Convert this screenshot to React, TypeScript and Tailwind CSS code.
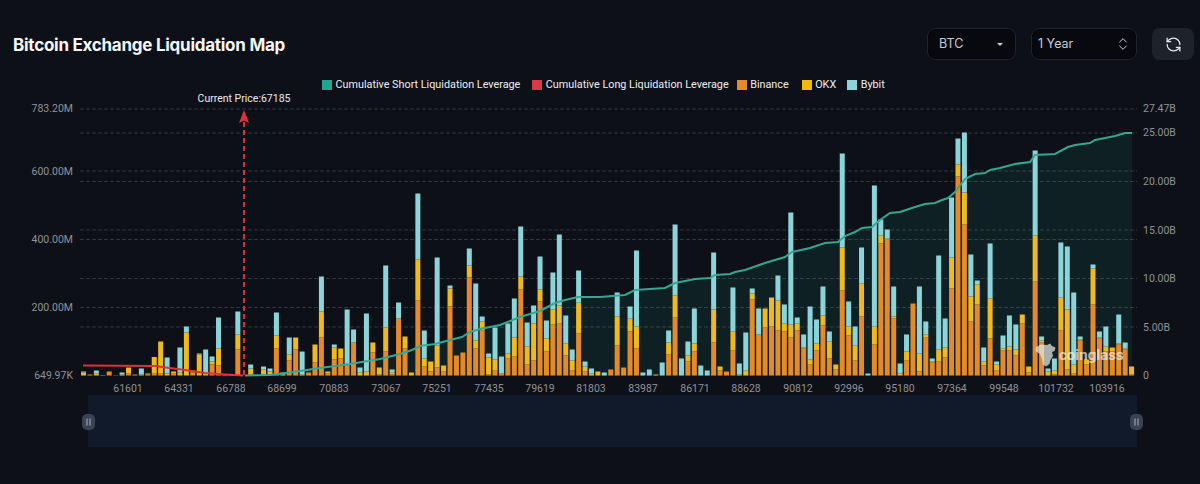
import React from "react";
import { RefreshCcw, ChevronsUpDown } from "lucide-react";

const O = "#e58a2a", Y = "#efb91f", B = "#8bd5da";
const barsData: [number, number, number][] = [
[0,3,1],[1,0,0],[0,2,3],[0.5,0,0],[4,0,0],[0.3,0,0],[0,1,2],[2,6,0],[1,0,0],[0,1,6],[1,1,0],[2,16.5,0],[2,32,0],[0,2,16],[2,2,0],[0,3,25],[0,43,6],[3,2,0],[0,21,1],[0,2,24],[11,3,5],[10,17,31],[0.5,0,0.5],[1,0,0],[26,15,23],[0,0,0],[1,6,4],[0,0,0],[1,5,3],[1,3,3],[27,13,23],[0,1,2],[15,6,17],[26,12,0],
[0,1,23],[3,0,0],[13,18,0],[38,26,35],[2,2,0],[16,12,3],[17,10,0],[10,0,56],[33,0,13],[0,3,5],[0,4,58],[23,10,0],[1,7,0],[24,24,62],[1,2,3],[57,0,16],[27,12,0],[0,3,0],[75,41,66],[9,8,28],[4,10,0],[8,22,88],[4,6,0],[69,18,3],[20,0,0],[23,0,0],[98,12,17],[27,8,57],[45,9,5],[1,17,4],[5,11,32],[2,0,17],[17,5,30],[19,19,39],[86,13,50],[11,18,24],[15,37,18],[74,12,33],[24,13,18],[51,15,37],[52,18,71],[20,12,28],[5,10,11],[42,31,32],[4,5,5],[0,2,5],[0,4,0],
[0,0,3],[6,0,0],[30,29,24],[8,0,0],[44,13,12],[27,22,76],[0,0,3],[0,0,6],[0,1,0],[0,0,13],[21,12,12],[58,22,71],[0,0,17],[14,6,14],[24,8,35],[0,0,10],[0,0,5],[33,33,57],[5,4,0],[4,0,0],[25,19,44],[0,1,11],[0,5,38],[76,6,5],[41,0,26],[48,19,0],[49,29,0],[45,30,25],[44,8,19],[38,13,112],[45,7,6],[27,1,13],[11,5,53],[25,7,24],[50,10,29],[17,17,10],[6,5,0],[85,43,94],[40,9,25],[15,15,19],[59,33,36],[0,0,2],[31,18,141],[132,8,16],[136,1,9],[57,2,30],
[0,2,10],[15,9,17],[72,0,0],[4,18,67],[38,3,13],[13,1,3],[14,12,94],[18,10,29],[87,31,60],[199,12,26],[151,32,60],[54,25,42],[71,20,4],[10,4,14],[37,40,55],[5,6,3],[25,2,13],[25,4,31],[20,6,25],[52,9,0],[3,6,0],[94,46,85],[33,2,4],[0,4,3],[1,4,12],[45,33,55],[6,60,63],[2,9,72],[35,1,3],[11,5,0],[71,36,4],[37,1,6],[24,5,20],[24,4,0],[31,1,29],[26,1,6],[1,8,0],
];

const green: [number, number][] = [[245,375.5],[270,375],[290,372.5],[300,371],[320,368],[350,364],[380,359],[400,354],[412,350],[420,346],[435,344],[450,340],[462,337],[470,332],[480,329],[500,325],[520,317],[540,311],[555,303],[565,300],[578,297],[600,297],[625,295],[635,290],[665,288],[675,283],[695,279],[710,278],[715,275],[730,274],[735,272],[745,270],[765,263],[785,257],[792,252],[810,248],[825,243],[838,242],[845,236],[855,232],[862,228],[872,227],[880,220],[890,213],[900,212],[915,207],[925,204],[935,203],[942,200],[948,198],[955,192],[965,179],[975,174],[985,173],[990,170],[1000,168],[1015,164],[1030,162],[1035,155],[1055,154],[1068,147],[1075,145],[1090,143],[1095,140],[1115,136],[1125,133],[1132,133]];
const red: [number, number][] = [[83,365.5],[155,366],[170,368],[185,370],[205,373],[225,374.5],[243,375.5]];
const pts = (a: [number, number][]) => a.map((p) => p.join(",")).join(" ");

const xLabels: [string, number][] = [["61601",128],["64331",179],["66788",231],["68699",282],["70883",334],["73067",386],["75251",437],["77435",489],["79619",540],["81803",591],["83987",643],["86171",695],["88628",746],["90812",798],["92996",849],["95180",900],["97364",952],["99548",1004],["101732",1056],["103916",1107]];
const gridY = [109, 133, 171, 181.5, 230, 239.5, 278.5, 307.5, 327];
const leftLabels: [string, number][] = [["783.20M",108],["600.00M",171],["400.00M",239],["200.00M",307],["649.97K",375]];
const rightLabels: [string, number][] = [["27.47B",108],["25.00B",132],["20.00B",181],["15.00B",230],["10.00B",278],["5.00B",327],["0",375]];
const legend: [string, string, string][] = [["#20a58d","Cumulative Short Liquidation Leverage","mr-[12px]"],["#df3547","Cumulative Long Liquidation Leverage","mr-[8px]"],[O,"Binance","mr-[13px]"],["#f0b90b","OKX","mr-[11px]"],[B,"Bybit",""]];
const FONT = "Roboto, 'Liberation Sans', sans-serif";
const BASE = 375.5;

function Bars() {
  return (
    <g>
      {barsData.map(([o, y, b], i) => {
        const x = 81 + i * 6.43;
        return (
          <g key={i}>
            {o > 0 && <rect x={x} y={BASE - o} width={5} height={o} fill={O} />}
            {y > 0 && <rect x={x} y={BASE - o - y} width={5} height={y} fill={Y} />}
            {b > 0 && <rect x={x} y={BASE - o - y - b} width={5} height={b} fill={B} />}
          </g>
        );
      })}
    </g>
  );
}

function Handle({ x }: { x: number }) {
  return (
    <g>
      <rect x={x} y={414} width={13} height={16} rx={5} fill="#3a4254" />
      <rect x={x + 4.5} y={418.5} width={1} height={7} fill="#aab0bd" />
      <rect x={x + 7.5} y={418.5} width={1} height={7} fill="#aab0bd" />
    </g>
  );
}

export default function App() {
  return (
    <div className="w-[1200px] h-[484px] bg-[#0d1017] overflow-hidden flex flex-col font-['Inter',sans-serif]">
      <div className="h-[77px] shrink-0 flex items-center justify-between pl-[13px] pr-[6px] pt-[11px]">
        <h1 className="text-[17px] mt-[4px] font-bold text-[#f4f6f8] tracking-[-0.26px]">Bitcoin Exchange Liquidation Map</h1>
        <div className="flex items-center gap-[15px]">
          <div className="w-[89px] h-[32px] rounded-lg border border-[#1f2329] bg-[#07090f] flex items-center justify-between pl-[11px] pr-[12px] text-[12.5px] text-[#c9cbdc]">
            <span>BTC</span>
            <span className="w-0 h-0 border-x-[3.5px] border-x-transparent border-t-[3.5px] border-t-[#c9cbdc]" />
          </div>
          <div className="w-[106px] h-[32px] rounded-lg border border-[#1f2329] bg-[#07090f] flex items-center justify-between pl-[6px] pr-[5px] text-[12.5px] text-[#c9cbdc]">
            <span>1 Year</span>
            <ChevronsUpDown size={16} strokeWidth={1.5} color="#c9cbdc" />
          </div>
          <button className="w-[42px] h-[32px] rounded-lg bg-[#1e222b] flex items-center justify-center">
            <RefreshCcw size={17} strokeWidth={1.8} color="#e6e8ee" />
          </button>
        </div>
      </div>
      <div className="h-[16px] shrink-0 flex items-center pl-[322px] text-[10.8px] text-[#eceef2] font-['Roboto',sans-serif]">
        {legend.map(([c, t, m]) => (
          <div key={t} className={`flex items-center gap-[3.5px] ${m}`}>
            <span className="w-[10px] h-[10px] block" style={{ background: c }} />
            <span>{t}</span>
          </div>
        ))}
      </div>
      <svg width={1200} height={391} viewBox="0 93 1200 391" className="block shrink-0" fontFamily={FONT}>
        {gridY.map((y) => (
          <line key={y} x1={80} x2={1137} y1={y} y2={y} stroke="#33363d" strokeWidth={1} strokeDasharray="4 2" />
        ))}
        <polygon points={`245,376 ${pts(green)} 1132,376`} fill="#19a08c" fillOpacity={0.11} />
        <Bars />
        <polyline points={pts(green)} fill="none" stroke="#35a68f" strokeWidth={2} />
        <polyline points={pts(red)} fill="none" stroke="#e0303f" strokeWidth={2} />
        <line x1={244} x2={244} y1={375} y2={118} stroke="#d92f3c" strokeWidth={2} strokeDasharray="5 3" />
        <polygon points="244,110 249,123 244,120.5 239,123" fill="#e0303f" />
        <text x={244} y={101.5} textAnchor="middle" fontSize={10.5} fill="#e8eaee">Current Price:67185</text>
        {leftLabels.map(([t, y]) => (
          <text key={t} x={73} y={y + 3.8} textAnchor="end" fontSize={10.5} fill="#8f9298">{t}</text>
        ))}
        {rightLabels.map(([t, y]) => (
          <text key={t} x={1143} y={y + 3.8} fontSize={10.5} fill="#8f9298">{t}</text>
        ))}
        {xLabels.map(([t, x]) => (
          <text key={t} x={x} y={392} textAnchor="middle" fontSize={10.5} fill="#8f9298">{t}</text>
        ))}
        <rect x={88} y={395} width={1049} height={52} fill="#111a2b" />
        <Handle x={82} />
        <Handle x={1130} />
        <g opacity={0.72}>
          <path d="M1036 347 L1041 344.5 L1047 345 L1050 343.5 L1052 346 L1055.5 347.5 L1054.5 351 L1052 352 L1053 356 L1050.5 360 L1049.5 364 L1046 366.5 L1043 364.5 L1042 359 L1040 354 L1035.5 351 Z" fill="#e8e6e4" />
          <text x={1059} y={360} fontSize={15} fontWeight={700} fill="#f1ece6">coinglass</text>
        </g>
      </svg>
    </div>
  );
}
